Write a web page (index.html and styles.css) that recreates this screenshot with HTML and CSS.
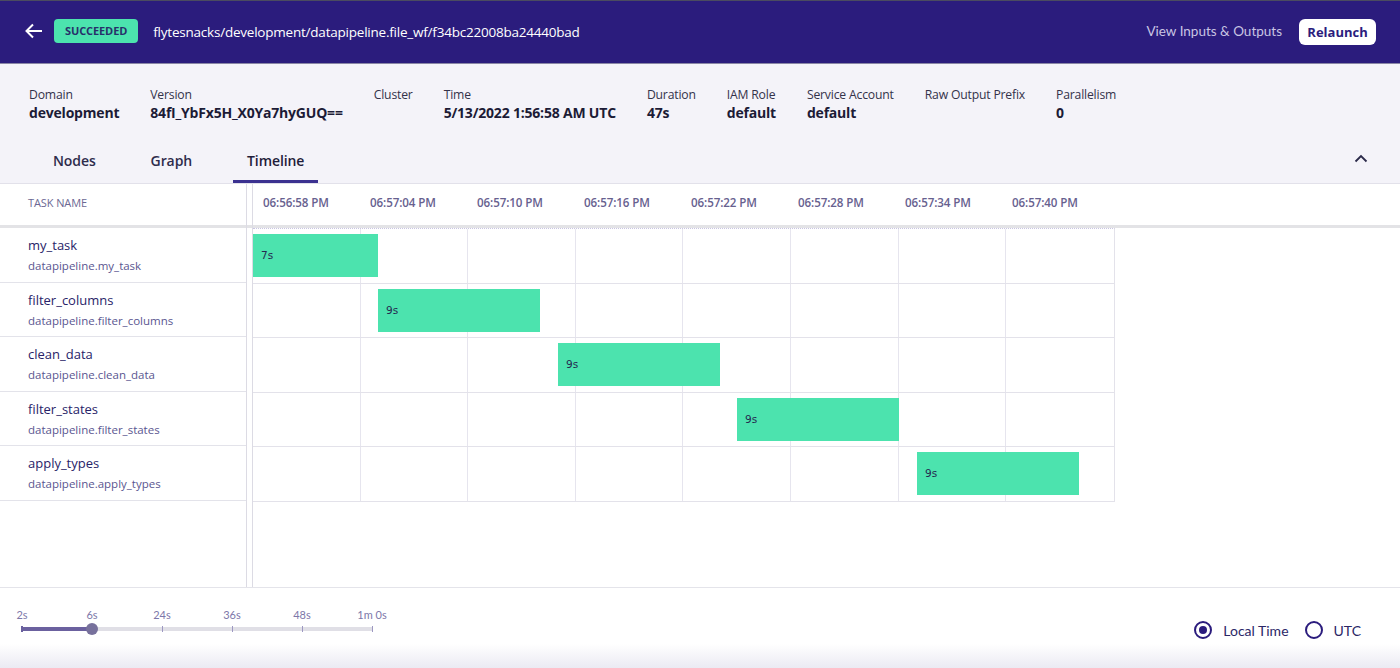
FILE: index.html
```html
<!DOCTYPE html>
<html>
<head>
<meta charset="utf-8">
<link rel="stylesheet" href="styles.css">
</head>
<body>
<div class="app">
  <header class="topbar">
    <svg class="back" width="18" height="16" viewBox="0 0 18 16"><path d="M17 8H2M8 1.5L1.5 8 8 14.5" fill="none" stroke="#fff" stroke-width="2"/></svg>
    <span class="badge">SUCCEEDED</span>
    <span class="path">flytesnacks/development/datapipeline.file_wf/f34bc22008ba24440bad</span>
    <span class="spacer"></span>
    <span class="io-link">View Inputs &amp; Outputs</span>
    <button class="relaunch">Relaunch</button>
  </header>

  <section class="info">
    <div class="meta">
      <div class="field"><div class="label">Domain</div><div class="value">development</div></div>
      <div class="field"><div class="label">Version</div><div class="value">84fI_YbFx5H_X0Ya7hyGUQ==</div></div>
      <div class="field"><div class="label">Cluster</div><div class="value"></div></div>
      <div class="field"><div class="label">Time</div><div class="value">5/13/2022 1:56:58 AM UTC</div></div>
      <div class="field"><div class="label">Duration</div><div class="value">47s</div></div>
      <div class="field"><div class="label">IAM Role</div><div class="value">default</div></div>
      <div class="field"><div class="label">Service Account</div><div class="value">default</div></div>
      <div class="field"><div class="label">Raw Output Prefix</div><div class="value"></div></div>
      <div class="field"><div class="label">Parallelism</div><div class="value">0</div></div>
    </div>
    <div class="tabs">
      <div class="tab">Nodes</div>
      <div class="tab">Graph</div>
      <div class="tab active">Timeline</div>
      <span class="spacer"></span>
      <svg class="chev" width="14" height="9" viewBox="0 0 14 9"><path d="M1.5 7.5L7 2l5.5 5.5" fill="none" stroke="#2b2a4a" stroke-width="1.8"/></svg>
    </div>
  </section>

  <section class="timeline">
    <div class="names">
      <div class="names-head">TASK NAME</div>
      <div class="name-row"><div class="tname">my_task</div><div class="tsub">datapipeline.my_task</div></div>
      <div class="name-row"><div class="tname">filter_columns</div><div class="tsub">datapipeline.filter_columns</div></div>
      <div class="name-row"><div class="tname">clean_data</div><div class="tsub">datapipeline.clean_data</div></div>
      <div class="name-row"><div class="tname">filter_states</div><div class="tsub">datapipeline.filter_states</div></div>
      <div class="name-row"><div class="tname">apply_types</div><div class="tsub">datapipeline.apply_types</div></div>
    </div>
    <div class="chart">
      <div class="chart-head">
        <div class="tick">06:56:58 PM</div>
        <div class="tick">06:57:04 PM</div>
        <div class="tick">06:57:10 PM</div>
        <div class="tick">06:57:16 PM</div>
        <div class="tick">06:57:22 PM</div>
        <div class="tick">06:57:28 PM</div>
        <div class="tick">06:57:34 PM</div>
        <div class="tick">06:57:40 PM</div>
      </div>
      <div class="chart-body">
        <div class="grow"><i></i><i></i><i></i><i></i><i></i><i></i><i></i><i></i><div class="bar" style="left:0px;width:125px">7s</div></div>
        <div class="grow"><i></i><i></i><i></i><i></i><i></i><i></i><i></i><i></i><div class="bar" style="left:125px;width:162px">9s</div></div>
        <div class="grow"><i></i><i></i><i></i><i></i><i></i><i></i><i></i><i></i><div class="bar" style="left:305px;width:162px">9s</div></div>
        <div class="grow"><i></i><i></i><i></i><i></i><i></i><i></i><i></i><i></i><div class="bar" style="left:484px;width:162px">9s</div></div>
        <div class="grow"><i></i><i></i><i></i><i></i><i></i><i></i><i></i><i></i><div class="bar" style="left:664px;width:162px">9s</div></div>
      </div>
    </div>
  </section>

  <footer class="footer">
    <div class="slider">
      <div class="track"></div>
      <div class="fill"></div>
      <div class="thumb"></div>
      <div class="marks">
        <div class="mark"><span>2s</span><b></b></div>
        <div class="mark"><span>6s</span><b></b></div>
        <div class="mark"><span>24s</span><b></b></div>
        <div class="mark"><span>36s</span><b></b></div>
        <div class="mark"><span>48s</span><b></b></div>
        <div class="mark"><span>1m 0s</span><b></b></div>
      </div>
    </div>
    <span class="spacer"></span>
    <div class="radios">
      <label class="radio"><span class="circle on"></span>Local Time</label>
      <label class="radio"><span class="circle"></span>UTC</label>
    </div>
  </footer>
</div>
</body>
</html>
```

FILE: styles.css
```css
* { box-sizing: border-box; }
html, body { margin: 0; padding: 0; }
body {
  font-family: "Open Sans", "Noto Sans", sans-serif;
  background: #fff;
  color: #1f1d3a;
}
.app {
  width: 1400px;
  height: 668px;
  display: flex;
  flex-direction: column;
  overflow: hidden;
}
.spacer { flex: 1; }

/* top bar */
.topbar {
  height: 64px;
  flex: none;
  background: #2b1c7d;
  border-top: 1px solid #4b4b60;
  border-bottom: 1px solid #8a87a6;
  display: flex;
  align-items: center;
  padding: 0 24px 0 25px;
}
.back { margin-right: 11px; margin-top: -2px; }
.badge {
  background: #4ce3ae;
  color: #27306a;
  font-size: 11px;
  font-weight: 700;
  height: 24px;
  line-height: 24px;
  padding: 0 11px;
  border-radius: 4px;
  letter-spacing: -0.1px;
  margin-top: -2px;
}
.path {
  color: #fff;
  font-size: 13.5px;
  margin-left: 15px;
  letter-spacing: -0.22px;
  margin-top: -1px;
}
.io-link {
  font-family: Lato, "Open Sans", sans-serif;
  color: #c9c5e3;
  font-size: 13.5px;
  margin-right: 17px;
  margin-top: -2px;
}
.relaunch {
  font-family: "Open Sans", sans-serif;
  background: #fff;
  color: #2b1c7d;
  border: none;
  border-radius: 6px;
  font-size: 13px;
  font-weight: 700;
  height: 26px;
  width: 77px;
  padding: 0;
  margin-top: 0;
}

/* info */
.info {
  flex: none;
  background: #f4f3f9;
  height: 120px;
  border-bottom: 1px solid #e2e1ea;
  display: flex;
  flex-direction: column;
}
.meta {
  display: flex;
  gap: 31px;
  padding: 22px 0 0 29px;
  height: 76px;
}
.label {
  font-size: 12.2px;
  color: #33324a;
  line-height: 18px;
  letter-spacing: -0.18px;
}
.value {
  font-size: 14px;
  font-weight: 700;
  color: #1c1b36;
  line-height: 18px;
  letter-spacing: -0.2px;
}
.tabs {
  display: flex;
  align-items: stretch;
  padding-left: 39px;
  padding-right: 32px;
  gap: 27px;
  height: 43px;
}
.tab {
  padding: 0 14px;
  font-size: 14px;
  font-weight: 600;
  color: #2e2c4c;
  display: flex;
  align-items: center;
  border-bottom: 3px solid transparent;
  letter-spacing: -0.1px;
}
.tab.active { border-bottom-color: #3b3190; color: #1f1d3a; }
.chev { align-self: center; margin-top: -6px; }

/* timeline */
.timeline {
  flex: 1;
  display: flex;
  border-bottom: 1px solid #e4e4ea;
  min-height: 0;
}
.names {
  width: 253px;
  flex: none;
  border-right: 1px solid #dcdbe4;
  position: relative;
}
.names::after {
  content: "";
  position: absolute;
  top: 0;
  bottom: 0;
  left: 246px;
  border-left: 1px solid #dcdbe4;
}
.names-head {
  height: 44px;
  border-bottom: 3px solid #e3e3e6;
  font-size: 11px;
  color: #6c6893;
  padding: 11px 0 0 28px;
  letter-spacing: -0.1px;
}
.name-row {
  height: 54.5px;
  width: 247px;
  border-bottom: 1px solid #e3e3ea;
  padding: 7px 0 0 28px;
}
.tname {
  font-size: 13px;
  color: #282368;
  line-height: 20px;
}
.tsub {
  font-size: 11.5px;
  color: #5a5690;
  line-height: 22px;
}

.chart { flex: 1; min-width: 0; }
.chart-head {
  height: 44px;
  border-bottom: 3px solid #e3e3e6;
  display: flex;
  padding-top: 11px;
}
.tick {
  width: 107px;
  flex: none;
  padding-left: 10px;
  font-size: 11.6px;
  font-weight: 600;
  color: #67618f;
  letter-spacing: -0.1px;
}
.chart-body {
  width: 862px;
  border-top: 1px dotted #c9c5e2;
  border-right: 1px solid #e3e2ea;
}
.grow {
  height: 54.5px;
  display: flex;
  position: relative;
  border-bottom: 1px solid #e3e2ea;
}
.grow i {
  width: 107.6px;
  flex: none;
  border-right: 1px solid #e6e5ee;
}
.grow i:last-of-type { border-right: none; }
.bar {
  position: absolute;
  top: 5px;
  height: 43px;
  background: #4ce3ae;
  color: #252a50;
  font-family: "DejaVu Sans", sans-serif;
  font-size: 10.5px;
  line-height: 43px;
  padding-left: 8px;
}

/* footer */
.footer {
  height: 80px;
  flex: none;
  display: flex;
  align-items: flex-start;
  padding: 0 39px 0 22px;
  background: linear-gradient(to bottom, #ffffff 0, #ffffff 56px, #ebeaf3 80px);
}
.slider {
  position: relative;
  width: 350px;
  margin-top: 20px;
  height: 30px;
}
.marks {
  display: flex;
  justify-content: space-between;
  position: relative;
}
.mark {
  width: 0;
  display: flex;
  flex-direction: column;
  align-items: center;
}
.mark span {
  font-family: Lato, sans-serif;
  font-size: 11px;
  color: #7d77a9;
  white-space: nowrap;
  line-height: 14px;
}
.mark b {
  width: 1px;
  height: 6px;
  background: #9d98c2;
  margin-top: 4px;
}
.mark:first-child b { width: 2px; background: #6b619f; }
.track {
  position: absolute;
  left: 0;
  right: 0;
  top: 19px;
  height: 4px;
  background: #e0dfe6;
}
.fill {
  position: absolute;
  left: 0;
  width: 70px;
  top: 19px;
  height: 4px;
  background: #6b619f;
}
.thumb {
  position: absolute;
  left: 64px;
  top: 15px;
  width: 12px;
  height: 12px;
  border-radius: 50%;
  background: #77719c;
  z-index: 2;
}
.radios {
  display: flex;
  align-items: center;
  gap: 16px;
  margin-top: 33px;
}
.radio {
  display: flex;
  align-items: center;
  font-family: Lato, sans-serif;
  font-size: 14px;
  color: #2b2766;
}
.circle {
  width: 18px;
  height: 18px;
  border-radius: 50%;
  border: 2px solid #2b1c7d;
  margin-right: 11px;
  display: flex;
  align-items: center;
  justify-content: center;
}
.circle.on::after {
  content: "";
  width: 8px;
  height: 8px;
  border-radius: 50%;
  background: #2b1c7d;
}
```
